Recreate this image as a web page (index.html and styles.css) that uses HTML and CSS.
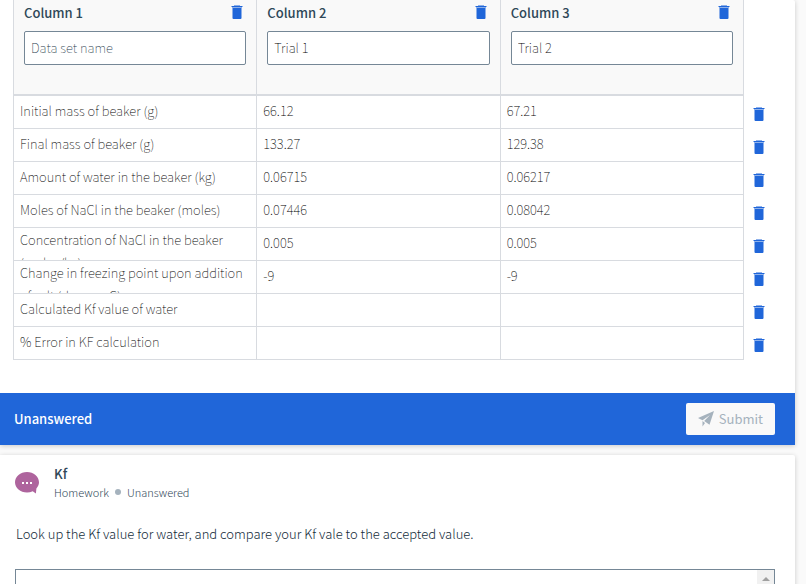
FILE: index.html
```
<!DOCTYPE html>
<html lang="en">
<head>
    <meta charset="UTF-8">
    <meta name="viewport" content="width=device-width, initial-scale=1.0">
    <title>Homework</title>
    <link rel="stylesheet" href="styles.css">
</head>
<body>
    <!-- Shared icon -->
    <svg class="sprite" aria-hidden="true">
        <symbol id="trash" viewBox="0 0 12 14">
            <path opacity=".5" d="M3 0h6v1H3zM1 2h10v2H1z"/>
            <path d="M.5 1h11v1H.5zM2 3h8v1H2zM1.500 4h9v9q0 1-1 1h-7q-1 0-1-1z"/>
        </symbol>
    </svg>

    <main class="page">
        <!-- Data table question -->
        <section class="card">
            <table class="data-table">
                <colgroup>
                    <col><col><col><col class="col-action">
                </colgroup>
                <thead>
                    <tr>
                        <th>
                            <div class="col-head">
                                <label for="col1">Column 1</label>
                                <button class="delete-btn" aria-label="Delete column 1"><svg class="trash"><use href="#trash"/></svg></button>
                            </div>
                            <input class="col-name" id="col1" type="text" placeholder="Data set name">
                        </th>
                        <th>
                            <div class="col-head">
                                <label for="col2">Column 2</label>
                                <button class="delete-btn" aria-label="Delete column 2"><svg class="trash"><use href="#trash"/></svg></button>
                            </div>
                            <input class="col-name" id="col2" type="text" value="Trial 1">
                        </th>
                        <th>
                            <div class="col-head">
                                <label for="col3">Column 3</label>
                                <button class="delete-btn" aria-label="Delete column 3"><svg class="trash"><use href="#trash"/></svg></button>
                            </div>
                            <input class="col-name" id="col3" type="text" value="Trial 2">
                        </th>
                        <td class="action"></td>
                    </tr>
                </thead>
                <tbody>
                    <tr>
                        <td><div class="cell">Initial mass of beaker (g)</div></td>
                        <td><div class="cell">66.12</div></td>
                        <td><div class="cell">67.21</div></td>
                        <td class="action"><button class="delete-btn" aria-label="Delete row 1"><svg class="trash"><use href="#trash"/></svg></button></td>
                    </tr>
                    <tr>
                        <td><div class="cell">Final mass of beaker (g)</div></td>
                        <td><div class="cell">133.27</div></td>
                        <td><div class="cell">129.38</div></td>
                        <td class="action"><button class="delete-btn" aria-label="Delete row 2"><svg class="trash"><use href="#trash"/></svg></button></td>
                    </tr>
                    <tr>
                        <td><div class="cell">Amount of water in the beaker (kg)</div></td>
                        <td><div class="cell">0.06715</div></td>
                        <td><div class="cell">0.06217</div></td>
                        <td class="action"><button class="delete-btn" aria-label="Delete row 3"><svg class="trash"><use href="#trash"/></svg></button></td>
                    </tr>
                    <tr>
                        <td><div class="cell">Moles of NaCl in the beaker (moles)</div></td>
                        <td><div class="cell">0.07446</div></td>
                        <td><div class="cell">0.08042</div></td>
                        <td class="action"><button class="delete-btn" aria-label="Delete row 4"><svg class="trash"><use href="#trash"/></svg></button></td>
                    </tr>
                    <tr>
                        <td><div class="cell cell-long">Concentration of NaCl in the beaker (moles/kg)</div></td>
                        <td><div class="cell">0.005</div></td>
                        <td><div class="cell">0.005</div></td>
                        <td class="action"><button class="delete-btn" aria-label="Delete row 5"><svg class="trash"><use href="#trash"/></svg></button></td>
                    </tr>
                    <tr>
                        <td><div class="cell cell-long">Change in freezing point upon addition of salt (degrees C)</div></td>
                        <td><div class="cell">-9</div></td>
                        <td><div class="cell">-9</div></td>
                        <td class="action"><button class="delete-btn" aria-label="Delete row 6"><svg class="trash"><use href="#trash"/></svg></button></td>
                    </tr>
                    <tr>
                        <td><div class="cell">Calculated Kf value of water</div></td>
                        <td><div class="cell"></div></td>
                        <td><div class="cell"></div></td>
                        <td class="action"><button class="delete-btn" aria-label="Delete row 7"><svg class="trash"><use href="#trash"/></svg></button></td>
                    </tr>
                    <tr>
                        <td><div class="cell">% Error in KF calculation</div></td>
                        <td><div class="cell"></div></td>
                        <td><div class="cell"></div></td>
                        <td class="action"><button class="delete-btn" aria-label="Delete row 8"><svg class="trash"><use href="#trash"/></svg></button></td>
                    </tr>
                </tbody>
            </table>
            <footer class="submit-bar">
                <span>Unanswered</span>
                <button class="submit-btn" disabled>
                    <svg class="plane" viewBox="0 0 16 16" aria-hidden="true">
                        <path d="M16 0 0 7l4.500 2.200L12 4 6.200 10l5.300 3.800zM4.500 10v5.500l2.500-3.500z"/>
                    </svg>
                    Submit
                </button>
            </footer>
        </section>

        <!-- Next question -->
        <section class="card">
            <header class="question-head">
                <svg class="bubble" viewBox="0 0 24 22" aria-hidden="true">
                    <path fill="#ae649d" d="M12 0C5.400 0 0 4.500 0 10.300s5.400 10.200 12 10.200c2.100 0 4-.4 5.700-1.200l3.200 2.300.5-5.200c1.600-1.700 2.600-3.800 2.600-6.100C24 4.500 18.600 0 12 0z"/>
                    <path fill="#fff" d="M7 10h2v2H7zM11 10h2v2h-2zM15 10h2v2h-2z"/>
                </svg>
                <div>
                    <h2>Kf</h2>
                    <p class="meta"><span>Homework</span><i class="dot"></i><span>Unanswered</span></p>
                </div>
            </header>
            <label class="prompt" for="answer">Look up the Kf value for water, and compare your Kf vale to the accepted value.</label>
            <div class="answer-box">
                <textarea class="answer" id="answer"></textarea>
                <div class="scroll-track"><i class="scroll-up"></i></div>
            </div>
        </section>
    </main>
</body>
</html>
```
FILE: styles.css
```
* {
    margin: 0;
    padding: 0;
    box-sizing: border-box;
}
body {
    font-family: "Noto Sans CJK SC", "Open Sans", sans-serif;
    font-size: 13px;
    line-height: 20px;
    color: #2f4858;
    background: #fafafa;
}
button, input, textarea {
    font: inherit;
}
.sprite {
    display: none;
}
.page {
    height: 100vh;
    overflow: hidden;
    padding-right: 11px;
}
.card {
    background: #fff;
    margin-bottom: 10px;
    border-radius: 0 2px 0 0;
    box-shadow: 0 1px 5px rgba(0, 0, 0, 0.2);
}

/* Data table */
.data-table {
    width: 100%;
    padding-left: 13px;
    table-layout: fixed;
    border-collapse: separate;
    border-spacing: 0;
    margin-bottom: 33px;
}
.col-action {
    width: 52px;
}
.data-table th,
.data-table td {
    border-left: 1px solid #d8dbe0;
    border-bottom: 1px solid #d8dbe0;
    text-align: left;
}
.data-table th {
    height: 96px;
    padding: 3px 10px 0;
    vertical-align: top;
    background: #f9f9f9;
    border-bottom-width: 2px;
}
.data-table .action {
    border-bottom: none;
    padding: 3px 0 0 9px;
}
.col-head {
    display: flex;
    justify-content: space-between;
    padding-right: 3px;
    margin-bottom: 8px;
    font-weight: 500;
}
.col-name {
    display: block;
    width: 100%;
    height: 34px;
    padding: 0 6px 2px;
    border: 1px solid #758796;
    border-radius: 2px;
    background: #fff;
    color: #000;
    font-weight: 100;
}
.col-name::placeholder {
    color: #1d3848;
    opacity: 1;
}
.cell {
    height: 32px;
    padding: 3px 6px;
    line-height: 23px;
    overflow: hidden;
    color: #000;
    font-weight: 100;
}
.cell-long {
    padding-top: 0;
    padding-bottom: 0;
}
.delete-btn {
    display: flex;
    align-items: center;
    height: 18px;
    border: none;
    background: none;
    cursor: pointer;
}
.trash {
    width: 12px;
    height: 14px;
    fill: #2066d9;
}

/* Submit bar */
.submit-bar {
    display: flex;
    align-items: center;
    justify-content: space-between;
    height: 52px;
    padding: 0 20px 0 14px;
    background: #2066d9;
    color: #fff;
    font-weight: 500;
}
.submit-btn {
    display: flex;
    align-items: center;
    gap: 5px;
    height: 32px;
    padding: 0 12px;
    border: none;
    border-radius: 2px;
    background: #f9f9f9;
    color: #a5b2bd;
    font-weight: 400;
}
.plane {
    width: 16px;
    height: 16px;
    fill: #a5b2bd;
}

/* Question */
.question-head {
    display: flex;
    gap: 15px;
    padding: 9px 15px 0;
}
.question-head h2 {
    font-size: 13px;
    font-weight: 500;
    line-height: 20px;
}
.bubble {
    width: 24px;
    height: 22px;
    margin-top: 8px;
}
.meta {
    display: flex;
    align-items: center;
    font-size: 11px;
    line-height: 16px;
    color: #33495a;
    font-weight: 300;
}
.dot {
    width: 6px;
    height: 6px;
    margin: 0 6px;
    border-radius: 50%;
    background: #a5b2bd;
}
.prompt {
    display: block;
    padding: 24px 16px 25px;
    color: #142c3a;
    font-weight: 300;
}
.answer-box {
    display: flex;
    height: 120px;
    margin: 0 20px 0 15px;
    border: 1px solid #758796;
}
.answer {
    flex: 1;
    padding: 6px;
    border: none;
    resize: none;
}
.scroll-track {
    width: 17px;
    background: #f1f1f1;
}
.scroll-up {
    display: block;
    width: 0;
    margin: 7px auto 0;
    border: 4px solid transparent;
    border-top: none;
    border-bottom-color: #a0a0a0;
}
```
